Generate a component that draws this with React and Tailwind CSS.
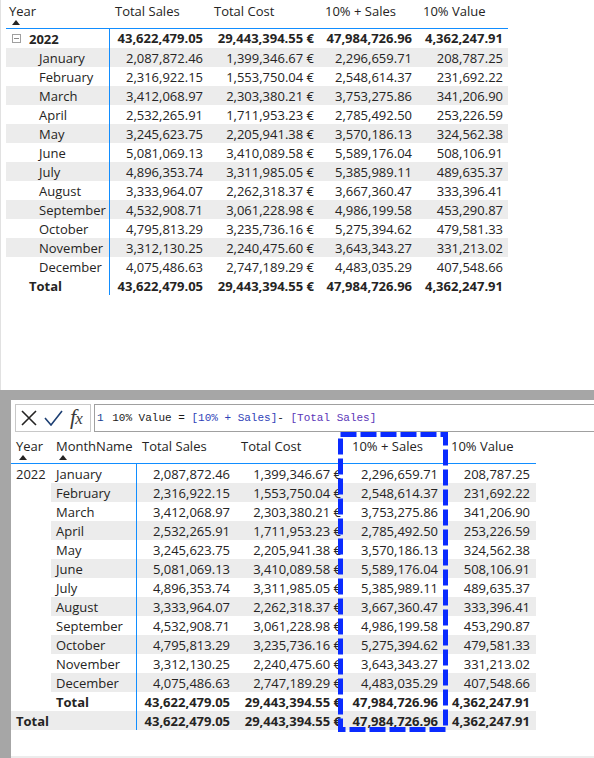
import React from 'react';

const rows = [
  ['January', '2,087,872.46', '1,399,346.67 €', '2,296,659.71', '208,787.25'],
  ['February', '2,316,922.15', '1,553,750.04 €', '2,548,614.37', '231,692.22'],
  ['March', '3,412,068.97', '2,303,380.21 €', '3,753,275.86', '341,206.90'],
  ['April', '2,532,265.91', '1,711,953.23 €', '2,785,492.50', '253,226.59'],
  ['May', '3,245,623.75', '2,205,941.38 €', '3,570,186.13', '324,562.38'],
  ['June', '5,081,069.13', '3,410,089.58 €', '5,589,176.04', '508,106.91'],
  ['July', '4,896,353.74', '3,311,985.05 €', '5,385,989.11', '489,635.37'],
  ['August', '3,333,964.07', '2,262,318.37 €', '3,667,360.47', '333,396.41'],
  ['September', '4,532,908.71', '3,061,228.98 €', '4,986,199.58', '453,290.87'],
  ['October', '4,795,813.29', '3,235,736.16 €', '5,275,394.62', '479,581.33'],
  ['November', '3,312,130.25', '2,240,475.60 €', '3,643,343.27', '331,213.02'],
  ['December', '4,075,486.63', '2,747,189.29 €', '4,483,035.29', '407,548.66'],
];

const total = ['43,622,479.05', '29,443,394.55 €', '47,984,726.96', '4,362,247.91'];

const SortArrow = ({ className }) => (
  <svg width="8" height="5" viewBox="0 0 8 5" className={className}>
    <path d="M0 5 L4 0 L8 5 Z" fill="#252423" />
  </svg>
);

// right aligned number cells for the 4 value columns
const Values = ({ vals, widths, bold }) => (
  <>
    {vals.map((v, i) => (
      <div
        key={i}
        className={`${widths[i]} text-right whitespace-nowrap overflow-hidden ${bold ? 'font-bold' : ''}`}
      >
        {v}
      </div>
    ))}
  </>
);

const topW = ['w-[98px] pr-[5px]', 'w-[111px] pr-[5px]', 'w-[98px] pr-[5px]', 'w-[91px] pr-[5px]'];
const botW = ['w-[98px] pr-[5px]', 'w-[111px] pr-[5px]', 'w-[99px] pr-[7px]', 'w-[91px] pr-[6px]'];

function TopMatrix() {
  return (
    <div className="h-[390px] border-l border-[#e1e1e1] pl-[5px]">
      <div className="w-[502px]">
        {/* header */}
        <div className="flex h-[29px] border-b border-[#118dff]">
          <div className="w-[104px] pl-[3px] pt-[2px]">
            <div className="leading-[19px]">Year</div>
            <SortArrow className="ml-[3px] -mt-[1px]" />
          </div>
          <div className="w-[98px] pl-[5px] pt-[2px] leading-[19px]">Total Sales</div>
          <div className="w-[111px] pl-[6px] pt-[2px] leading-[19px]">Total Cost</div>
          <div className="w-[98px] pl-[6px] pt-[2px] leading-[19px]">10% + Sales</div>
          <div className="w-[91px] pl-[6px] pt-[2px] leading-[19px]">10% Value</div>
        </div>

        {/* year row */}
        <div className="flex h-[19px] items-center">
          <div className="w-[104px] h-full border-r border-[#118dff] flex items-center pl-[6px]">
            <div className="w-[9px] h-[9px] border border-[#a0a0a0] flex items-center justify-center">
              <div className="w-[5px] h-px bg-[#8a8a8a]" />
            </div>
            <span className="ml-[8px] font-bold pt-[2px]">2022</span>
          </div>
          <Values vals={total} widths={topW} bold />
        </div>

        {rows.map((r, i) => (
          <div key={r[0]} className={`flex h-[19px] items-center pt-[2px] ${i % 2 === 0 ? 'bg-[#ececec]' : ''}`}>
            <div className="w-[104px] h-[19px] -mt-[2px] pt-[2px] border-r border-[#118dff] flex items-center pl-[33px]">{r[0]}</div>
            <Values vals={r.slice(1)} widths={topW} />
          </div>
        ))}

        <div className="flex h-[19px] items-center pt-[2px]">
          <div className="w-[104px] h-[19px] -mt-[2px] pt-[2px] border-r border-[#118dff] flex items-center pl-[23px] font-bold">Total</div>
          <Values vals={total} widths={topW} bold />
        </div>
      </div>
    </div>
  );
}

function FormulaBar() {
  return (
    <div className="flex h-[28px] pl-[4px]">
      <div className="w-[76px] h-full border border-[#c8c8c8] flex items-center pl-[5px] gap-[7px]">
        <svg width="16" height="16" viewBox="0 0 16 16">
          <path d="M1 1 L15 15 M15 1 L1 15" stroke="#252423" strokeWidth="1.6" fill="none" />
        </svg>
        <svg width="19" height="16" viewBox="0 0 19 16">
          <path d="M1 8 L7 15 L18 1" stroke="#1d3f73" strokeWidth="1.6" fill="none" />
        </svg>
        <span className="font-['Liberation_Serif',serif] italic text-[22px] leading-none text-[#3b3a39] -mt-[3px] tracking-[-1px]">
          f<span className="text-[17px]">x</span>
        </span>
      </div>
      <div className="flex-1 ml-[3px] h-full border-y border-l border-[#a0a0a0] flex items-center pl-[2px] font-['Liberation_Mono',monospace] text-[11px] whitespace-pre text-[#1b1a19]">
        <span className="text-[#1a3f8f]">1</span>
        <span className="ml-[2px]">{' 10% Value = '}</span>
        <span className="text-[#2f3fb8]">[10% + Sales]</span>
        <span>{'- '}</span>
        <span className="text-[#5a36b8]">[Total Sales]</span>
      </div>
    </div>
  );
}

function BottomTable() {
  return (
    <div className="w-[525px]">
      <div className="flex h-[32px] border-b border-[#118dff]">
        <div className="w-[40px] pl-[5px] pt-[5px]">
          <div className="leading-[19px]">Year</div>
          <SortArrow className="ml-[3px] -mt-[1px]" />
        </div>
        <div className="w-[86px] pl-[5px] pt-[5px]">
          <div className="leading-[19px]">MonthName</div>
          <SortArrow className="ml-[3px] -mt-[1px]" />
        </div>
        <div className="w-[98px] pl-[5px] pt-[5px] leading-[19px]">Total Sales</div>
        <div className="w-[111px] pl-[6px] pt-[5px] leading-[19px]">Total Cost</div>
        <div className="w-[99px] pl-[6px] pt-[5px] leading-[19px]">10% + Sales</div>
        <div className="w-[91px] pl-[6px] pt-[5px] leading-[19px]">10% Value</div>
      </div>

      {rows.map((r, i) => (
        <div key={r[0]} className="flex h-[19px] items-center">
          <div className="w-[40px] pl-[5px] pt-[2px]">{i === 0 ? '2022' : ''}</div>
          <div className={`flex h-full items-center pt-[2px] ${i % 2 === 1 ? 'bg-[#ececec]' : ''}`}>
            <div className="w-[86px] h-[19px] -mt-[2px] pt-[2px] border-r border-[#118dff] flex items-center pl-[5px]">{r[0]}</div>
            <Values vals={r.slice(1)} widths={botW} />
          </div>
        </div>
      ))}

      <div className="flex h-[19px] items-center pt-[2px]">
        <div className="w-[40px]" />
        <div className="w-[86px] h-[19px] -mt-[2px] pt-[2px] border-r border-[#118dff] flex items-center pl-[5px] font-bold">Total</div>
        <Values vals={total} widths={botW} bold />
      </div>
      <div className="flex h-[19px] items-center pt-[2px] bg-[#ececec]">
        <div className="w-[126px] h-[19px] -mt-[2px] pt-[2px] border-r border-[#118dff] flex items-center pl-[5px] font-bold">Total</div>
        <Values vals={total} widths={botW} bold />
      </div>
    </div>
  );
}

export default function App() {
  return (
    <div className="w-[594px] h-[758px] bg-white overflow-hidden font-['Open_Sans',sans-serif] text-[13px] text-[#252423]">
      <TopMatrix />
      <div className="relative h-[368px] bg-[#a6a6a6] pt-[10px] pl-[11px]">
        <div className="h-full bg-white pt-[4px] border-b-2 border-[#ececec]">
          <FormulaBar />
          <BottomTable />
        </div>
        {/* highlight around 10% + Sales column */}
        <svg className="absolute left-[338px] top-[42px]" width="110" height="300" viewBox="0 0 110 300">
          <rect x="2.5" y="2.5" width="105" height="295" fill="none" stroke="#0a2bff" strokeWidth="5" strokeDasharray="16 4" />
        </svg>
      </div>
    </div>
  );
}
